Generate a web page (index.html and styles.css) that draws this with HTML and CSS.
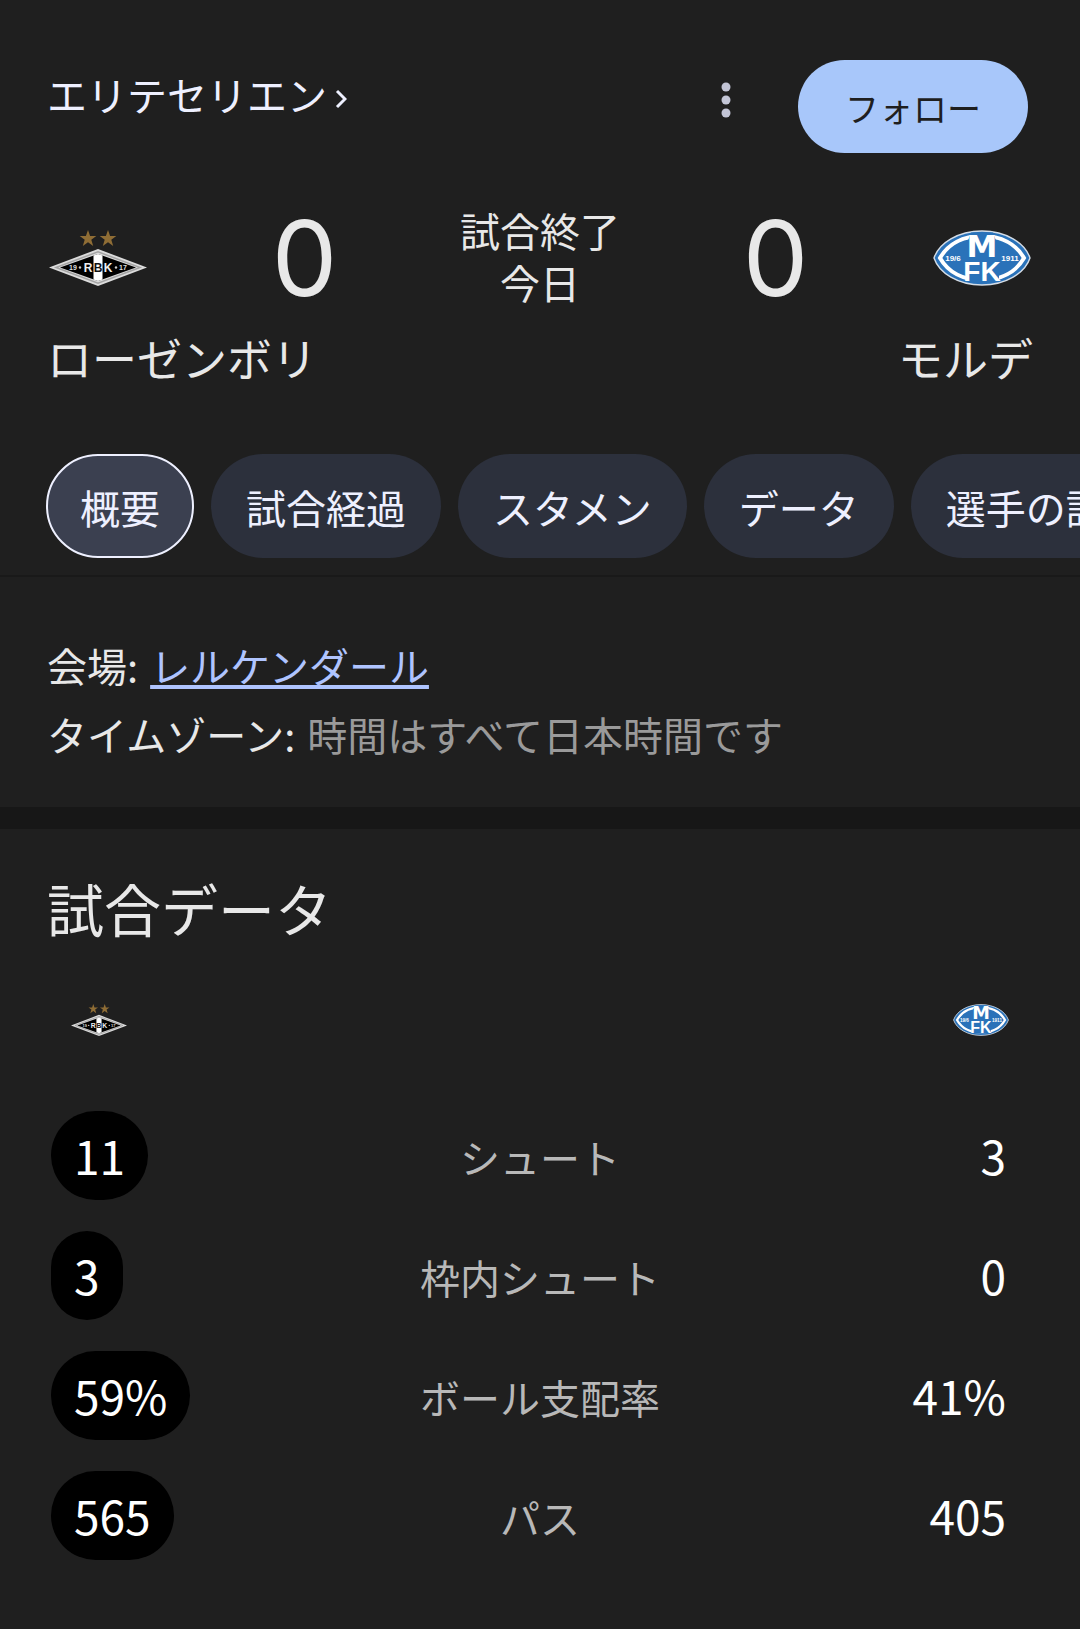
FILE: index.html
```html
<!DOCTYPE html>
<html lang="ja">
<head>
  <meta charset="UTF-8" />
  <meta name="viewport" content="width=device-width, initial-scale=1.0" />
  <title>ローゼンボリ 対 モルデ</title>
  <link rel="stylesheet" href="styles.css">
</head>

<body>
  <header class="top-bar">
    <a class="league" href="#league">エリテセリエン
      <svg class="chevron" viewBox="0 0 12 20" aria-hidden="true"><path d="M2 2l8 8-8 8" /></svg>
    </a>
    <button class="more-btn" type="button" aria-label="その他">
      <svg viewBox="0 0 10 36" aria-hidden="true">
        <circle cx="5" cy="5" r="4.500" /><circle cx="5" cy="18" r="4.500" /><circle cx="5" cy="31" r="4.500" />
      </svg>
    </button>
    <button class="follow-btn" type="button">フォロー</button>
  </header>

  <section class="scoreboard">
    <svg class="crest" viewBox="0 0 98 56" role="img" aria-label="ローゼンボリ">
      <g id="crest-rbk">
        <path fill="#8f6d35" d="M39 0l2.100 6h6.200l-5 3.800 1.900 6.200-5.200-3.800-5.200 3.800 1.900-6.200-5-3.800h6.200zM59 0l2.100 6h6.200l-5 3.800 1.900 6.200-5.200-3.800-5.200 3.800 1.900-6.200-5-3.800h6.200z" />
        <path fill="#dcdcdc" d="M0 37.500L49 19l49 18.500L49 56z" />
        <path fill="none" stroke="#a4a4a4" stroke-width="1.500" d="M7 37.500L49 21.800l42 15.700L49 53.200z" />
        <path fill="#000" d="M11 37.500L49 24l38 13.500L49 51z" />
        <path fill="#fff" d="M44.500 25.500L49 24l4.500 1.500v24L49 51l-4.500-1.500z" />
        <g class="crest-text">
          <text x="39" y="42" font-size="12" fill="#eee">R</text>
          <text x="49" y="42" font-size="12" fill="#111">B</text>
          <text x="59" y="42" font-size="12" fill="#eee">K</text>
          <text x="24" y="40" font-size="7" fill="#ddd">19</text>
          <text x="74" y="40" font-size="7" fill="#ddd">17</text>
        </g>
        <circle cx="31" cy="37.500" r="1.200" fill="#ccc" />
        <circle cx="67" cy="37.500" r="1.200" fill="#ccc" />
      </g>
    </svg>
    <div class="score">0</div>
    <div class="status">試合終了<br>今日</div>
    <div class="score">0</div>
    <svg class="crest" viewBox="0 0 98 56" role="img" aria-label="モルデ">
      <g id="crest-mfk">
        <path fill="#2a72b9" stroke="#d5dde6" stroke-width="1.400" d="M1 28C6 13 25 1 49 1s43 12 48 27c-5 15-24 27-48 27S6 43 1 28z" />
        <path fill="none" stroke="#fff" stroke-width="4" d="M7 28C15 14 30 6 49 6s34 8 42 22c-8 14-23 22-42 22S15 42 7 28z" />
        <path fill="#2a72b9" d="M38 2.500h22l9 24.500-3 3v22H33V30l-4-3z" />
        <g class="crest-text" fill="#fff">
          <text class="crest-wide" x="49" y="27" font-size="31">M</text>
          <text x="49" y="51" font-size="28">FK</text>
          <text x="20" y="31" font-size="8">19/6</text>
          <text x="77" y="31" font-size="8">1911</text>
        </g>
      </g>
    </svg>
  </section>
  <div class="teams">
    <span>ローゼンボリ</span>
    <span>モルデ</span>
  </div>

  <nav class="tabs">
    <button class="tab active" type="button">概要</button>
    <button class="tab" type="button">試合経過</button>
    <button class="tab" type="button">スタメン</button>
    <button class="tab" type="button">データ</button>
    <button class="tab" type="button">選手の評価</button>
  </nav>

  <section class="details">
    <div class="detail">会場: <a href="#venue">レルケンダール</a></div>
    <div class="detail">タイムゾーン: <span class="muted">時間はすべて日本時間です</span></div>
  </section>

  <main class="stats">
    <h2>試合データ</h2>
    <table>
      <thead>
        <tr>
          <th><svg class="crest-small" viewBox="0 0 98 56" role="img" aria-label="ローゼンボリ"><use href="#crest-rbk" /></svg></th>
          <td></td>
          <th><svg class="crest-small" viewBox="0 0 98 56" role="img" aria-label="モルデ"><use href="#crest-mfk" /></svg></th>
        </tr>
      </thead>
      <tbody>
        <tr><td><span class="lead">11</span></td><th scope="row">シュート</th><td>3</td></tr>
        <tr><td><span class="lead">3</span></td><th scope="row">枠内シュート</th><td>0</td></tr>
        <tr><td><span class="lead">59%</span></td><th scope="row">ボール支配率</th><td>41%</td></tr>
        <tr><td><span class="lead">565</span></td><th scope="row">パス</th><td>405</td></tr>
      </tbody>
    </table>
  </main>
</body>
</html>
```
FILE: styles.css
```css
* { box-sizing: border-box; }

body {
  margin: 0;
  background: #1f1f1f;
  color: #e8e8e8;
  font-family: 'Noto Sans CJK JP', sans-serif;
  font-size: 40px;
  overflow-x: hidden;
}

button {
  border: none;
  font-family: inherit;
  cursor: pointer;
}

/* Header */
.top-bar {
  display: flex;
  align-items: flex-start;
  padding: 60px 52px 0 47px;
}

.league {
  display: flex;
  align-items: center;
  gap: 8px;
  margin-right: auto;
  line-height: 68px;
  color: #eef0ff;
  text-decoration: none;
}

.chevron {
  width: 12px;
  height: 20px;
  margin-top: 10px;
  fill: none;
  stroke: #eef0ff;
  stroke-width: 3;
}

.more-btn {
  width: 48px;
  height: 80px;
  margin-right: 48px;
  padding: 0;
  background: none;
}

.more-btn svg {
  display: block;
  width: 10px;
  height: 36px;
  margin: 0 auto;
  fill: #c3c5d6;
}

.follow-btn {
  width: 230px;
  height: 93px;
  padding: 2px 0 0;
  border-radius: 48px;
  background: #a8c7fa;
  color: #1f1f1f;
  font-size: 34px;
}

/* Scoreboard */
.scoreboard {
  display: grid;
  grid-template-columns: 102px 1fr auto 1fr 102px;
  align-items: center;
  margin-top: 51px;
  padding: 0 47px;
}

.crest {
  width: 98px;
  height: 56px;
  margin: 4px auto 0;
}

.crest-text {
  font-family: 'Liberation Sans', sans-serif;
  font-weight: bold;
  text-anchor: middle;
}

.crest-wide { font-family: 'DejaVu Sans', sans-serif; }

.score {
  padding-top: 4px;
  font-family: Inter, sans-serif;
  font-size: 104px;
  line-height: 100px;
  text-align: center;
}

.status {
  line-height: 52px;
  text-align: center;
}

.teams {
  display: flex;
  justify-content: space-between;
  margin-top: 20px;
  padding: 0 47px;
  font-size: 45px;
  line-height: 60px;
}

/* Tabs */
.tabs {
  display: flex;
  gap: 17px;
  margin-top: 66px;
  padding: 0 46px 17px;
  border-bottom: 2px solid #191919;
  overflow-x: auto;
  scrollbar-width: none;
}

.tab {
  flex: none;
  height: 104px;
  padding: 2px 35px 0;
  border-radius: 52px;
  background: #2c303c;
  color: #eef0ff;
  font-size: 40px;
}

.tab.active {
  padding: 2px 32px 0;
  border: 2px solid #eef0ff;
  background: #3b4050;
}

/* Match details */
.details {
  padding: 54px 47px 38px;
  border-bottom: 22px solid #171717;
  line-height: 69px;
}

.detail {
  display: flex;
  gap: 12px;
}

.details a {
  color: #afc4ff;
  text-decoration-thickness: 4px;
  text-underline-offset: 3px;
}

.muted { color: #9a9a9a; }

/* Stats */
.stats { padding: 38px 0 54px; }

.stats h2 {
  margin: 0;
  padding: 0 47px;
  font-size: 57px;
  font-weight: normal;
  line-height: 80px;
}

.stats table {
  width: 100%;
  padding: 0 51px;
  border-spacing: 0;
  table-layout: fixed;
}

.stats th, .stats td {
  height: 120px;
  padding: 0;
  font-weight: normal;
  text-align: center;
}

.stats th:first-child, .stats td:first-child { text-align: left; }
.stats th:last-child, .stats td:last-child {
  padding-right: 23px;
  text-align: right;
}

.stats thead th, .stats thead th:last-child {
  height: 148px;
  padding: 0 20px 14px;
}

.stats tbody th {
  padding-top: 4px;
  color: #b8b8b8;
}

.stats tbody td {
  color: #fff;
  font-size: 46px;
}

.lead {
  display: inline-block;
  padding: 0 23px;
  border-radius: 45px;
  background: #000;
  line-height: 89px;
}

.crest-small {
  display: inline-block;
  width: 56px;
  height: 32px;
  vertical-align: middle;
}
```
